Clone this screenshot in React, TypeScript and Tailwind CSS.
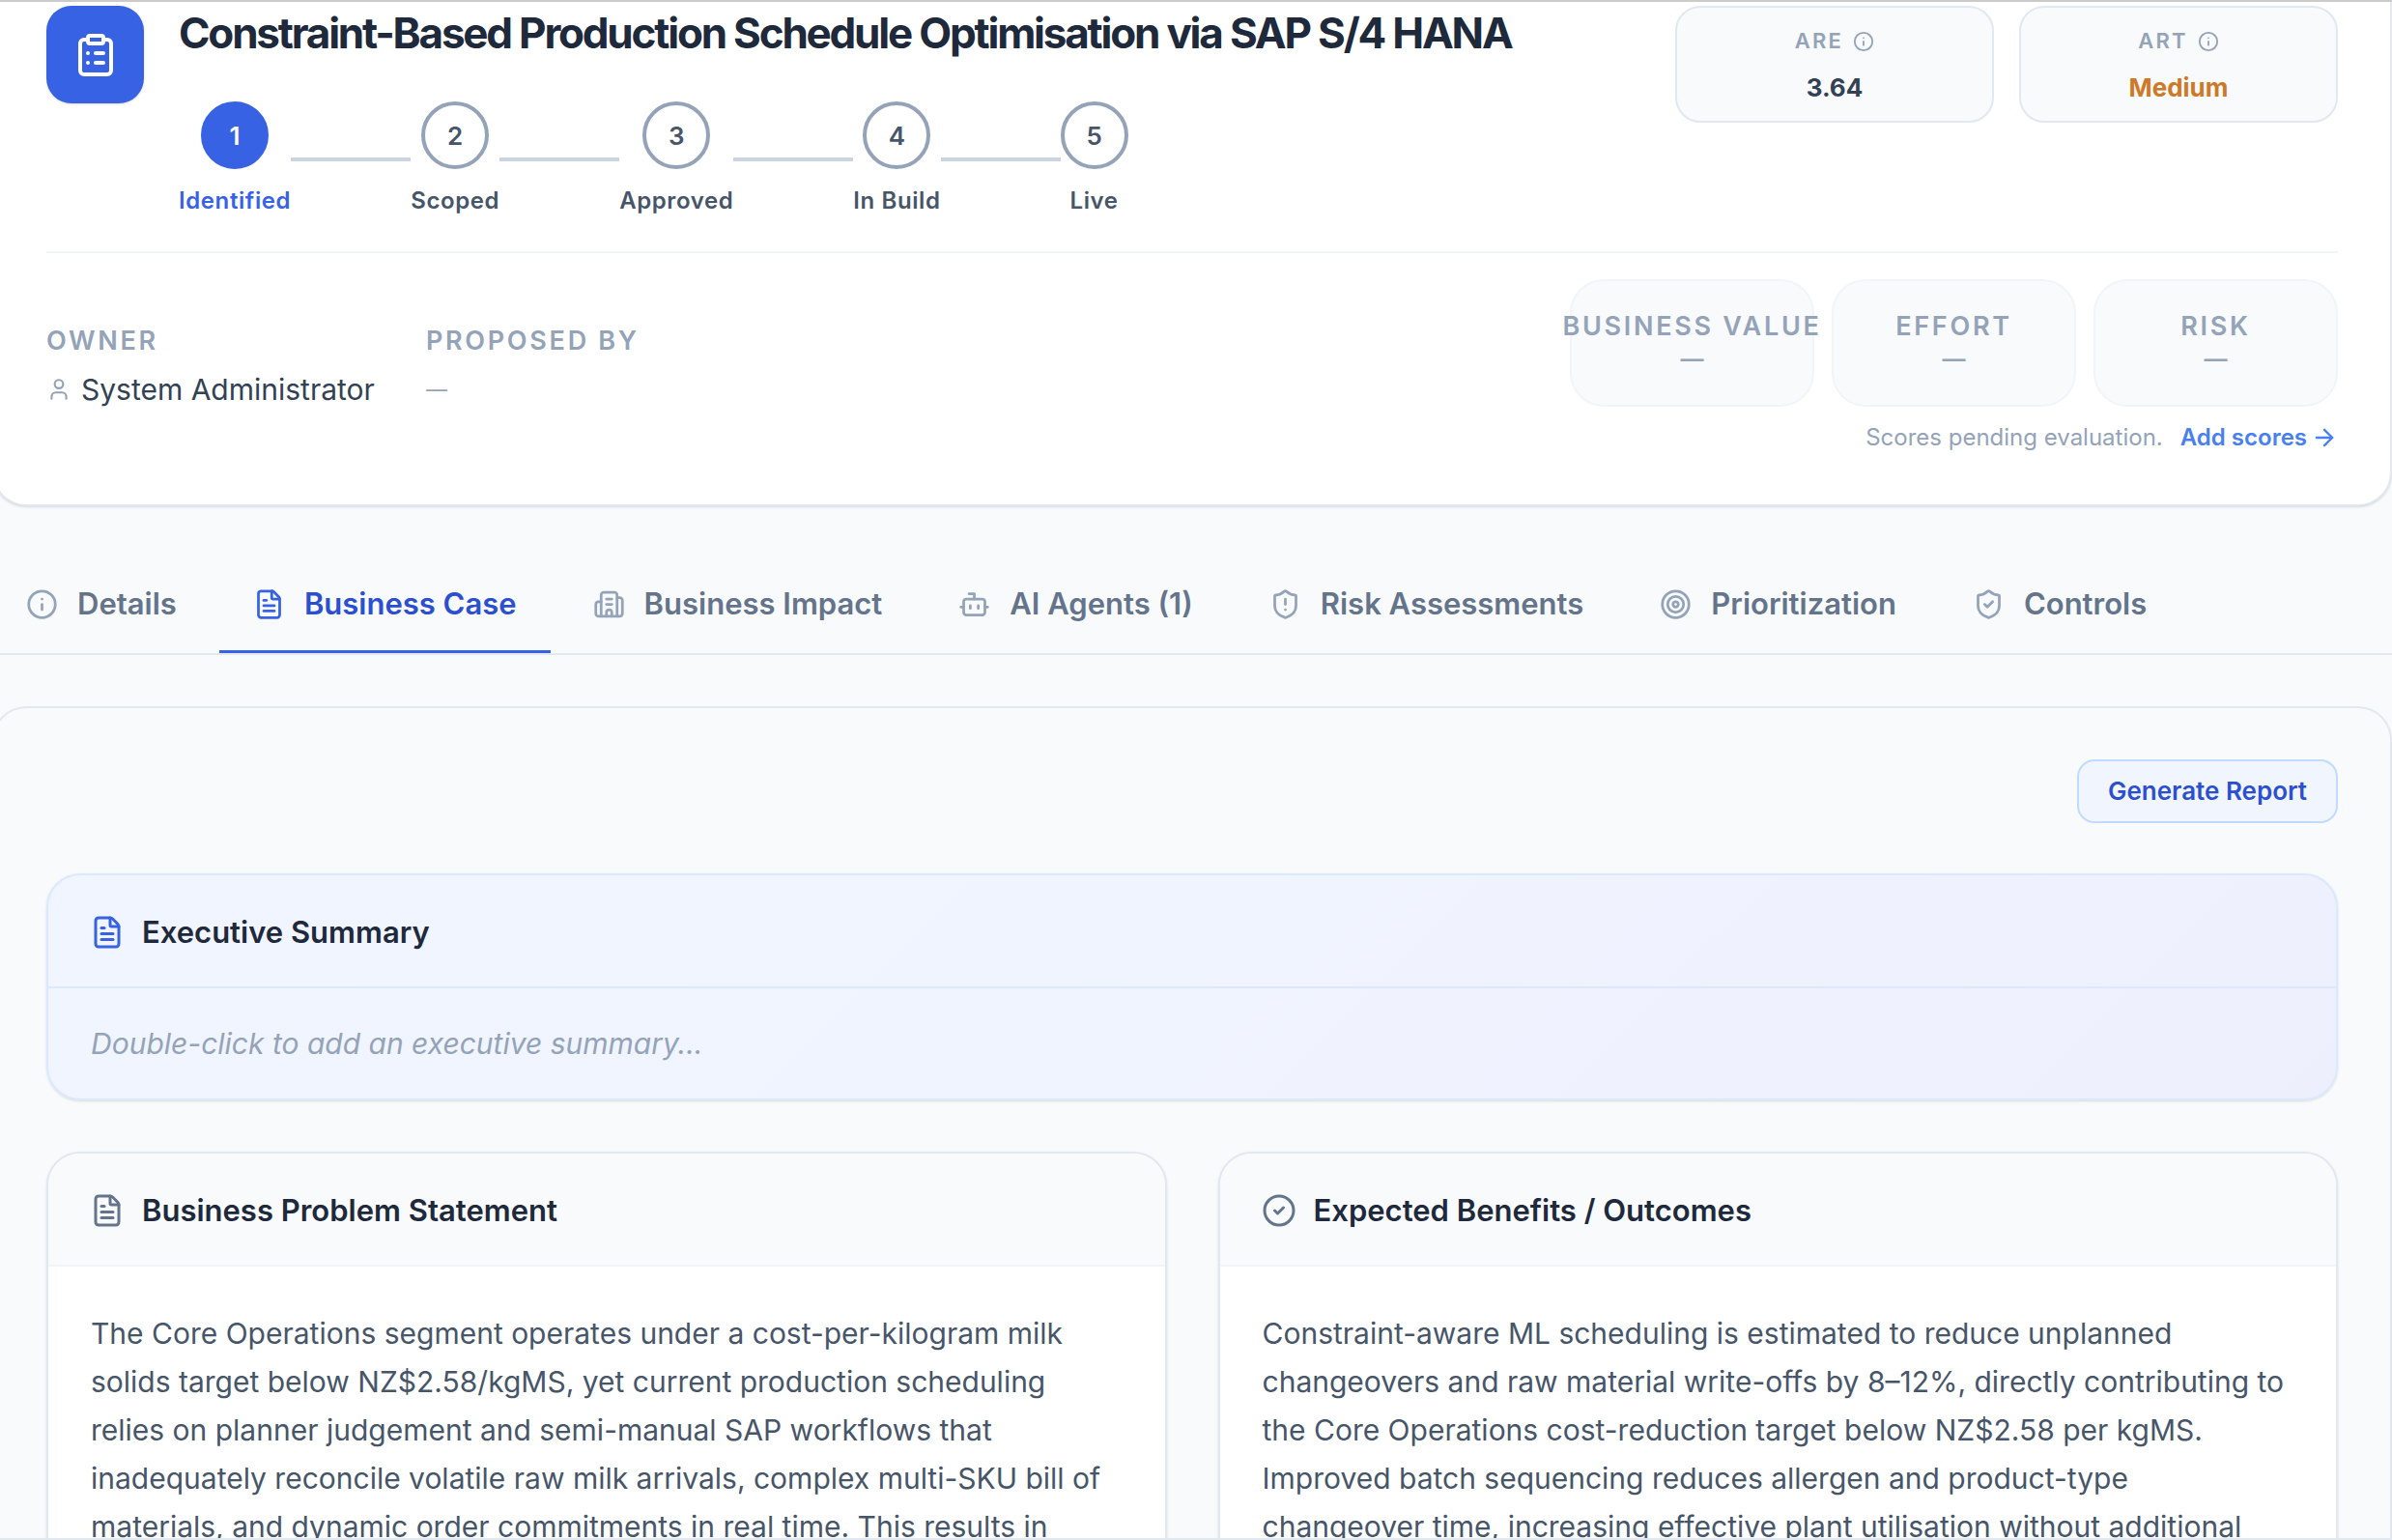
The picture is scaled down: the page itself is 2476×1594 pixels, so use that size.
import { Fragment } from "react";
import {
    ArrowRight,
    Bot,
    Building2,
    CircleCheck,
    ClipboardList,
    FileText,
    Info,
    ShieldAlert,
    ShieldCheck,
    Target,
    User,
    type LucideIcon,
} from "lucide-react";
import clsx from "clsx";

const steps = ["Identified", "Scoped", "Approved", "In Build", "Live"];

const scores = ["Business Value", "Effort", "Risk"];

const tabs: { label: string; icon: LucideIcon }[] = [
    { label: "Details", icon: Info },
    { label: "Business Case", icon: FileText },
    { label: "Business Impact", icon: Building2 },
    { label: "AI Agents (1)", icon: Bot },
    { label: "Risk Assessments", icon: ShieldAlert },
    { label: "Prioritization", icon: Target },
    { label: "Controls", icon: ShieldCheck },
];

const sections: { title: string; icon: LucideIcon; text: string }[] = [
    {
        title: "Business Problem Statement",
        icon: FileText,
        text: "The Core Operations segment operates under a cost-per-kilogram milk solids target below NZ$2.58/kgMS, yet current production scheduling relies on planner judgement and semi-manual SAP workflows that inadequately reconcile volatile raw milk arrivals, complex multi-SKU bill of materials, and dynamic order commitments in real time. This results in",
    },
    {
        title: "Expected Benefits / Outcomes",
        icon: CircleCheck,
        text: "Constraint-aware ML scheduling is estimated to reduce unplanned changeovers and raw material write-offs by 8–12%, directly contributing to the Core Operations cost-reduction target below NZ$2.58 per kgMS. Improved batch sequencing reduces allergen and product-type changeover time, increasing effective plant utilisation without additional",
    },
];

const Stepper = () => (
    <ol className="flex items-center">
        {steps.map((step, index) => (
            <Fragment key={step}>
                {index > 0 && <li aria-hidden className="h-1 w-31 bg-[#cbd5e1]" />}
                <li className="flex flex-col items-center gap-4">
                    <span
                        className={clsx(
                            "flex size-[70px] items-center justify-center rounded-full border-4 text-[26px] font-semibold",
                            index === 0
                                ? "border-[#3762e3] bg-[#3762e3] text-white"
                                : "border-[#94a3b8] bg-white text-[#475569]"
                        )}
                    >
                        {index + 1}
                    </span>
                    <span
                        className={clsx(
                            "text-[24px] leading-[34px] font-semibold tracking-wide whitespace-nowrap",
                            index === 0 ? "text-[#3762e3]" : "text-[#475569]"
                        )}
                    >
                        {step}
                    </span>
                </li>
            </Fragment>
        ))}
    </ol>
);

interface MetricProps {
    label: string;
    value: string;
    valueClass: string;
}
const Metric = ({ label, value, valueClass }: MetricProps) => (
    <div className="flex w-[330px] flex-col items-center gap-3 self-start rounded-[26px] border-2 border-[#e2e8f0] bg-[#f8fafc] pt-[18px] pb-[14px]">
        <div className="flex items-center gap-[10px] text-[22px] leading-[33px] font-semibold tracking-widest text-[#94a3b8]">
            {label}
            <Info size={22} />
        </div>
        <div className={clsx("text-[26px] leading-[40px] font-bold", valueClass)}>{value}</div>
    </div>
);

const Header = () => (
    <header className="rounded-b-[35px] border-2 border-t-0 border-[#e2e8f0] bg-white px-[54px] pt-1 pb-[51px] shadow-sm">
        <div className="flex items-start justify-between border-b-2 border-[#f1f5f9] pb-[35px]">
            <div className="flex items-start gap-9">
                <div className="flex size-[101px] items-center justify-center rounded-[26px] bg-[#3762e3] text-white shadow-sm">
                    <ClipboardList size={48} />
                </div>
                <div className="flex flex-col gap-[42px]">
                    <h1 className="text-[44px] leading-[57px] font-bold tracking-tighter text-[#1e293b]">
                        Constraint-Based Production Schedule Optimisation via SAP S/4 HANA
                    </h1>
                    <Stepper />
                </div>
            </div>
            <div className="flex gap-[26px]">
                <Metric label="ARE" value="3.64" valueClass="text-[#334155]" />
                <Metric label="ART" value="Medium" valueClass="text-[#cc7a29]" />
            </div>
        </div>

        <div className="flex items-start justify-between pt-[27px]">
            <dl className="flex gap-[53px] pt-11">
                <div className="flex flex-col gap-2">
                    <dt className="text-[27px] leading-[40px] font-semibold tracking-widest text-[#94a3b8]">OWNER</dt>
                    <dd className="flex items-center gap-[10px] text-[30px] leading-[44px] text-[#334155]">
                        <User size={26} className="text-[#94a3b8]" />
                        System Administrator
                    </dd>
                </div>
                <div className="flex flex-col gap-2">
                    <dt className="text-[27px] leading-[40px] font-semibold tracking-widest text-[#94a3b8]">PROPOSED BY</dt>
                    <dd className="text-[22px] leading-[44px] text-[#94a3b8]">—</dd>
                </div>
            </dl>
            <div className="flex flex-col items-end gap-[14px]">
                <div className="flex gap-[18px]">
                    {scores.map((score) => (
                        <div
                            key={score}
                            className="flex h-[132px] w-[253px] flex-col items-center justify-center rounded-[35px] border-2 border-[#f1f5f9] bg-[#f8fafc] leading-[34px] font-semibold text-[#94a3b8]"
                        >
                            <span className="text-[27px] tracking-widest whitespace-nowrap uppercase">{score}</span>
                            <span className="text-[24px]">—</span>
                        </div>
                    ))}
                </div>
                <p className="flex items-center gap-[18px] text-[24px] leading-9 text-[#94a3b8]">
                    Scores pending evaluation.
                    <a href="#scores" className="flex items-center gap-1 font-semibold text-[#4880f2]">
                        Add scores
                        <ArrowRight size={28} />
                    </a>
                </p>
            </div>
        </div>
    </header>
);

const Tabs = () => (
    <nav className="mt-[61px] flex gap-[9px] border-b-2 border-[#e2e8f0]">
        {tabs.map(({ label, icon: Icon }) => {
            const active = label === "Business Case";
            return (
                <button
                    key={label}
                    type="button"
                    className={clsx(
                        "flex items-center gap-5 border-b-3 px-[35px] pt-[17px] pb-[25px] text-[31px] leading-[46px] font-semibold",
                        active ? "border-[#3762e3] text-[#2c4fd0]" : "border-transparent text-[#64748b]"
                    )}
                >
                    <Icon size={33} className={active ? "text-[#3762e3]" : "text-[#94a3b8]"} />
                    {label}
                </button>
            );
        })}
    </nav>
);

const App = () => {
    return (
        <div className="h-screen overflow-hidden border-t-2 border-b-2 border-t-[#cbcbcb] border-b-[#e2e8f0] bg-[#f8fafc] font-['Inter',sans-serif]">
            <div className="-ml-2">
                <Header />
                <Tabs />

                <main className="mt-[53px] rounded-t-[35px] border-2 border-b-0 border-[#e2e8f0] px-[54px] pt-[53px]">
                    <div className="flex justify-end">
                        <button
                            type="button"
                            className="rounded-[18px] border-2 border-[#bfdbfe] bg-[#f0f5fe] px-[30px] py-3 text-[26px] leading-[38px] font-semibold text-[#2c4fd0]"
                        >
                            Generate Report
                        </button>
                    </div>

                    <section className="mt-[52px] rounded-[35px] border-2 border-[#dbe8fd] bg-linear-135 from-[#f0f5ff] via-[#f0f4fe] to-[#eeeffd] shadow-sm">
                        <div className="flex items-center gap-[18px] border-b-2 border-[#dbe8fd] px-[43px] pt-9 pb-[34px]">
                            <FileText size={36} className="text-[#3762e3]" />
                            <h2 className="text-[31px] leading-[45px] font-semibold text-[#1e293b]">Executive Summary</h2>
                        </div>
                        <p className="px-11 py-[35px] text-[30px] leading-[44px] text-[#94a3b8] italic">
                            Double-click to add an executive summary...
                        </p>
                    </section>

                    <div className="mt-[53px] grid grid-cols-2 gap-[53px]">
                        {sections.map(({ title, icon: Icon, text }) => (
                            <section
                                key={title}
                                className="overflow-hidden rounded-[35px] border-2 border-[#e2e8f0] bg-white shadow-sm"
                            >
                                <div className="flex items-center gap-[18px] border-b-2 border-[#f1f5f9] bg-[#f8fafc] px-[43px] pt-9 pb-[34px]">
                                    <Icon size={36} className="text-[#64748b]" />
                                    <h2 className="text-[31px] leading-[45px] font-semibold text-[#1e293b]">{title}</h2>
                                </div>
                                <p className="px-11 py-11 text-[30px] leading-[50px] text-[#475569]">{text}</p>
                            </section>
                        ))}
                    </div>
                </main>
            </div>
        </div>
    );
};

export default App;
